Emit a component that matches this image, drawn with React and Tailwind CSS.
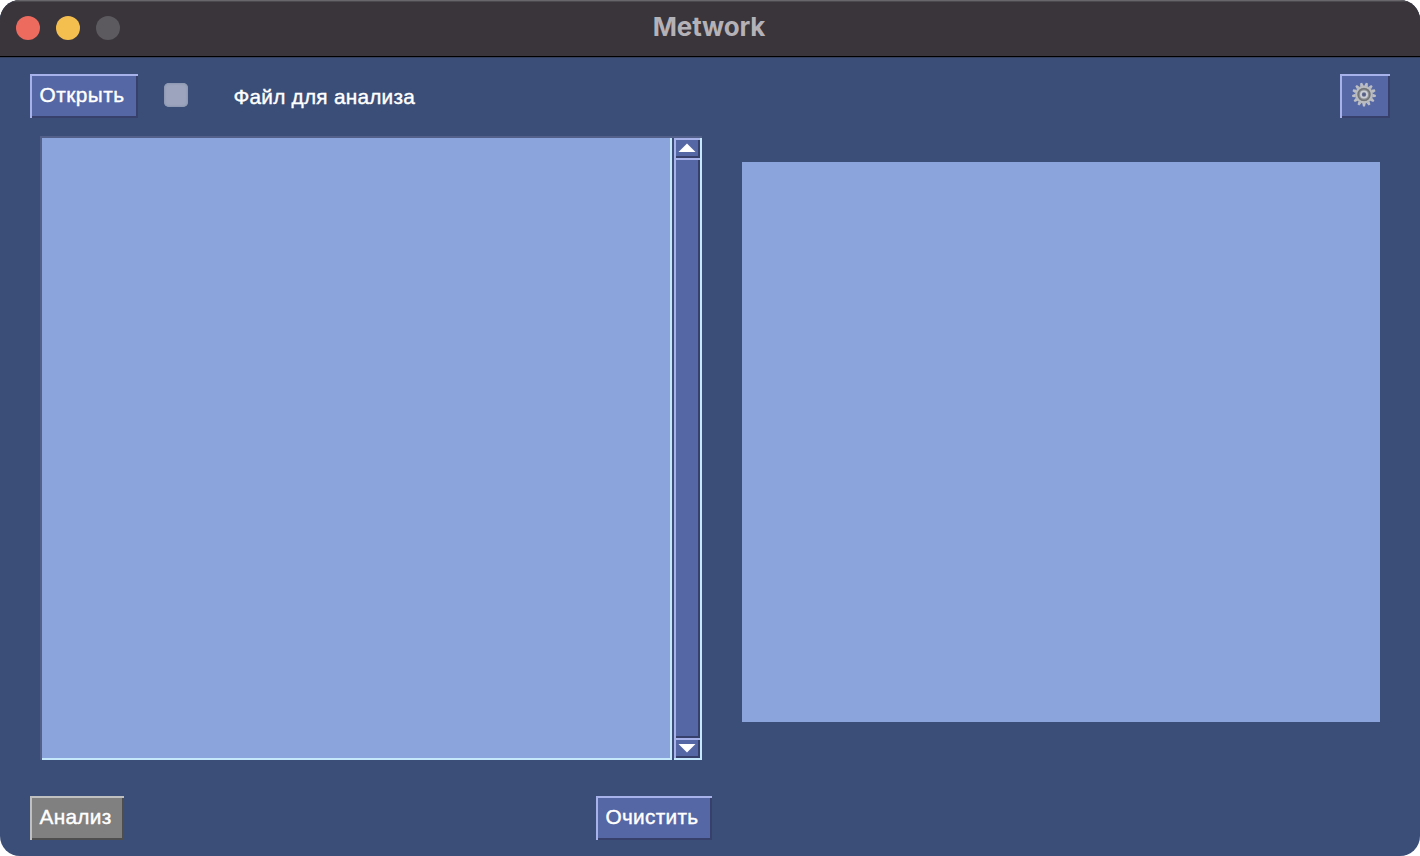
const raised =
  "shadow-[inset_0_2px_#a8b2ea,inset_2px_0_#a8b2ea,inset_-2px_-2px_#36406b] bg-[#5667a5]";
const disabled =
  "shadow-[inset_0_2px_#c0c0c0,inset_2px_0_#c0c0c0,inset_-2px_-2px_#4e4e4e] bg-[#808080]";

function Button({ className, children }) {
  return (
    <button
      className={`flex h-11 shrink-0 items-start whitespace-nowrap pt-[9px] pl-[9.5px] text-[20.8px] leading-6 text-white [-webkit-text-stroke:0.4px_white] ${className}`}
    >
      {children}
    </button>
  );
}

function Gear() {
  const teeth = Array.from({ length: 13 }, (_, i) => ((i + 0.5) * 360) / 13);
  return (
    <svg width="26" height="26" viewBox="-13 -12.5 26 26">
      {teeth.map((a) => (
        <path key={a} d="M-1.8 -8.5L-1 -11.9H1L1.8 -8.5Z" fill="#bcbec4" transform={`rotate(${a})`} />
      ))}
      <circle r="7.8" fill="#8e9094" stroke="#b9bbbe" strokeWidth="2.2" />
      <circle r="5.9" fill="none" stroke="#707276" strokeWidth="1.3" />
      <circle r="3.1" fill="#666e90" stroke="#cccfd5" strokeWidth="1.8" />
      <circle r="1.3" fill="#555d83" />
    </svg>
  );
}

function Arrow({ down }) {
  return (
    <div className={`flex h-5 shrink-0 justify-center ${raised}`}>
      <svg width="18" height="20" viewBox="0 0 18 20">
        <path d={down ? "M0.5 6H17.5L9 14.5Z" : "M0.5 14H17.5L9 5.5Z"} fill="white" />
      </svg>
    </div>
  );
}

export default function App() {
  return (
    <div className="h-[856px] w-[1420px] bg-white">
      <div className="flex h-full flex-col overflow-hidden rounded-[20px] bg-[#3a4e78] font-['Liberation_Sans',sans-serif]">
        <header className="grid h-[57px] shrink-0 grid-cols-[1fr_auto_1fr] items-start border-b border-black bg-[#39353b] shadow-[inset_0_1px_#69666b,inset_0_2px_#4b484e,0_1px_#35405c]">
          <div className="flex gap-4 pt-4 pl-4">
            <span className="size-6 rounded-full bg-[#ed6a5f]" />
            <span className="size-6 rounded-full bg-[#f5bf4f]" />
            <span className="size-6 rounded-full bg-[#5c595f]" />
          </div>
          <h1 className="-ml-0.5 pt-[11px] font-['Inter',sans-serif] text-[26px] leading-8 font-bold tracking-[-0.15px] text-[#b4b1b7]">Metwork</h1>
        </header>
        <div className="flex h-[79px] shrink-0 items-start pt-[17px] pr-[30px] pl-[30px]">
          <Button className={`w-[108px] tracking-[0.5px] ${raised}`}>Открыть</Button>
          <span className="mt-[9px] ml-[26px] size-6 shrink-0 rounded-[5px] bg-[#9ca5bd] shadow-[inset_0_0_2px_1px_#8c96b0]" />
          <span className="mt-[11px] ml-[45.5px] text-[20.8px] leading-6 tracking-[0.24px] text-white [-webkit-text-stroke:0.4px_white]">Файл для анализа</span>
          <button aria-label="Настройки" className={`ml-auto flex h-11 w-[50px] items-start pt-2 pl-[11px] ${raised}`}>
            <Gear />
          </button>
        </div>
        <main className="flex h-[624px] shrink-0 items-start pl-10">
          <div className="flex h-full w-[662px] gap-0.5 shadow-[inset_0_2px_#53618a]">
            <div className="h-full w-[632px] bg-[#8ca4dc] shadow-[inset_0_2px_#53618a,inset_2px_0_#53618a,inset_-2px_-2px_#c5e9fb]" />
            <div className="mt-0.5 flex w-7 flex-col border-r-2 border-b-2 border-[#c5e9fb]">
              <Arrow />
              <div className={`grow ${raised}`} />
              <Arrow down />
            </div>
          </div>
          <div className="mt-[26px] ml-10 h-[560px] w-[638px] bg-[#8ca4dc]" />
        </main>
        <footer className="flex pt-9 pl-[30px]">
          <Button className={`w-[94px] tracking-[0.3px] ${disabled}`}>Анализ</Button>
          <Button className={`ml-[472px] w-[116px] tracking-[0.3px] ${raised}`}>Очистить</Button>
        </footer>
      </div>
    </div>
  );
}
